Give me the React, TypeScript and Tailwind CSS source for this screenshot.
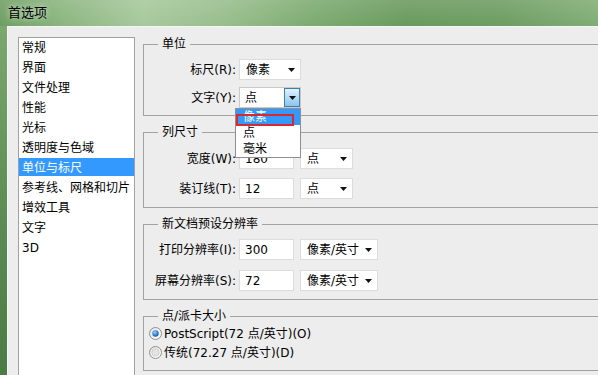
import type { ReactNode } from 'react';

const categories = [
  '常规',
  '界面',
  '文件处理',
  '性能',
  '光标',
  '透明度与色域',
  '单位与标尺',
  '参考线、网格和切片',
  '增效工具',
  '文字',
  '3D',
];

function Caret() {
  return (
    <svg width="7" height="4" viewBox="0 0 7 4" className="shrink-0">
      <path d="M0 0h7L3.5 4z" fill="#111" />
    </svg>
  );
}

function Radio({ checked }: { checked?: boolean }) {
  return (
    <svg width="13" height="13" viewBox="0 0 13 13" className="shrink-0">
      <defs>
        <linearGradient id="rbg" x1="0" y1="0" x2="1" y2="1">
          <stop offset="0" stopColor="#e2e2e2" />
          <stop offset="1" stopColor="#ffffff" />
        </linearGradient>
        <radialGradient id="rdot" cx="0.4" cy="0.35" r="0.7">
          <stop offset="0" stopColor="#9fd2ff" />
          <stop offset="0.6" stopColor="#2f7fd8" />
          <stop offset="1" stopColor="#1c5aa8" />
        </radialGradient>
      </defs>
      <circle cx="6.5" cy="6.5" r="6" fill="url(#rbg)" stroke="#8e8f8f" />
      {checked ? (
        <circle cx="6.5" cy="6.5" r="3.2" fill="url(#rdot)" />
      ) : (
        <circle cx="6.5" cy="6.5" r="3.6" fill="#e4e4e4" stroke="#c8c8c8" strokeWidth="0.8" />
      )}
    </svg>
  );
}

function Group({ title, className, children }: { title: string; className?: string; children: ReactNode }) {
  return (
    <fieldset className={`border border-[#a3a3a3] ${className ?? ''}`}>
      <legend className="ml-[14px] px-[4px] leading-[16px]">{title}</legend>
      {children}
    </fieldset>
  );
}

function Row({ label, children }: { label: string; children: ReactNode }) {
  return (
    <div className="flex h-[21px] items-center">
      <span className="w-[92px] shrink-0 text-right">{label}</span>
      <div className="ml-[3px] flex items-center gap-[6px]">{children}</div>
    </div>
  );
}

function TextBox({ value }: { value: string }) {
  return (
    <div className="flex h-[21px] w-[55px] items-center border border-[#dcdcdc] bg-white pl-[5px]">{value}</div>
  );
}

function Select({ value, className }: { value: string; className: string }) {
  return (
    <div className={`flex h-[21px] items-center justify-between border border-[#dcdcdc] bg-white pl-[6px] pr-[5px] ${className}`}>
      <span>{value}</span>
      <Caret />
    </div>
  );
}

// the 文字 combo is shown open, with its list dropped over the next group
function OpenCombo() {
  return (
    <div className="relative h-[21px] w-[62px]">
      <div className="flex h-full items-stretch border border-[#c9c9c9] bg-white">
        <span className="flex flex-1 items-center pl-[5px]">点</span>
        <div className="flex w-[16px] items-center justify-center border border-[#3c7fb1] bg-[linear-gradient(180deg,#e3f2fc_0%,#b5dbf5_50%,#8cc4ee_100%)]">
          <Caret />
        </div>
      </div>
      <div className="absolute left-[-4px] top-[21px] z-10 w-[66px] border border-[#8f8f8f] bg-white">
        <div className="h-[16px] bg-[#3399ff] pl-[7px] leading-[16px] text-white">像素</div>
        <div className="h-[16px] pl-[7px] leading-[17px]">点</div>
        <div className="h-[16px] pl-[7px] leading-[17px]">毫米</div>
        <div className="absolute left-0 top-[5px] h-[12px] w-[58px] border-2 border-[#d62a2e]" />
      </div>
    </div>
  );
}

export default function App() {
  return (
    <div className="h-[375px] w-[598px] overflow-hidden bg-[#ededed] font-['DejaVu_Sans','Noto_Sans_CJK_SC',sans-serif] text-[12px] text-black">
      <div className="flex h-[26px] items-center bg-[linear-gradient(180deg,rgba(255,255,255,0.12),rgba(255,255,255,0)),linear-gradient(90deg,#6e9e62_0%,#8ab57e_10%,#a7c89c_24%,#97bd8b_38%,#7cab70_52%,#6a9a5d_68%,#6d9d61_84%,#80ad75_100%)] pl-[8px] text-[13px] [text-shadow:0_0_6px_rgba(255,255,255,0.8)]">
        首选项
      </div>
      <div className="flex h-[349px]">
        <div className="w-[7px] shrink-0 bg-[linear-gradient(180deg,#7aa86e,#5a8a51_60%,#4c7b44)]" />
        <div className="flex flex-1 items-start border-l border-t border-[#f6f6f6] pl-[10px] pt-[9px]">
          <div className="mt-[1px] h-[360px] w-[117px] shrink-0 border border-[#a0a0a0] bg-white">
            {categories.map((c) => (
              <div key={c} className="h-[20px]">
                <div className={`h-[18px] pl-[3px] leading-[20px] ${c === '单位与标尺' ? 'bg-[#3399ff] text-white' : ''}`}>
                  {c}
                </div>
              </div>
            ))}
          </div>

          <div className="ml-[8px] w-[480px] shrink-0">
            <Group title="单位" className="pb-[7px] pt-[7px]">
              <div className="flex flex-col gap-[7px]">
                <Row label="标尺(R):">
                  <Select value="像素" className="w-[62px]" />
                </Row>
                <Row label="文字(Y):">
                  <OpenCombo />
                </Row>
              </div>
            </Group>

            <Group title="列尺寸" className="mt-[8px] pb-[8px] pt-[8px]">
              <div className="flex flex-col gap-[9px]">
                <Row label="宽度(W):">
                  <TextBox value="180" />
                  <Select value="点" className="w-[53px]" />
                </Row>
                <Row label="装订线(T):">
                  <TextBox value="12" />
                  <Select value="点" className="w-[53px]" />
                </Row>
              </div>
            </Group>

            <Group title="新文档预设分辨率" className="mt-[8px] pb-[8px] pt-[7px]">
              <div className="flex flex-col gap-[10px]">
                <Row label="打印分辨率(I):">
                  <TextBox value="300" />
                  <Select value="像素/英寸" className="w-[78px]" />
                </Row>
                <Row label="屏幕分辨率(S):">
                  <TextBox value="72" />
                  <Select value="像素/英寸" className="w-[78px]" />
                </Row>
              </div>
            </Group>

            <Group title="点/派卡大小" className="mt-[8px] pb-[8px]">
              <div className="flex h-[19px] items-center gap-[2px] pl-[5px]">
                <Radio checked />
                <span>PostScript(72 点/英寸)(O)</span>
              </div>
              <div className="flex h-[19px] items-center gap-[2px] pl-[5px]">
                <Radio />
                <span>传统(72.27 点/英寸)(D)</span>
              </div>
            </Group>
          </div>
        </div>
      </div>
    </div>
  );
}
